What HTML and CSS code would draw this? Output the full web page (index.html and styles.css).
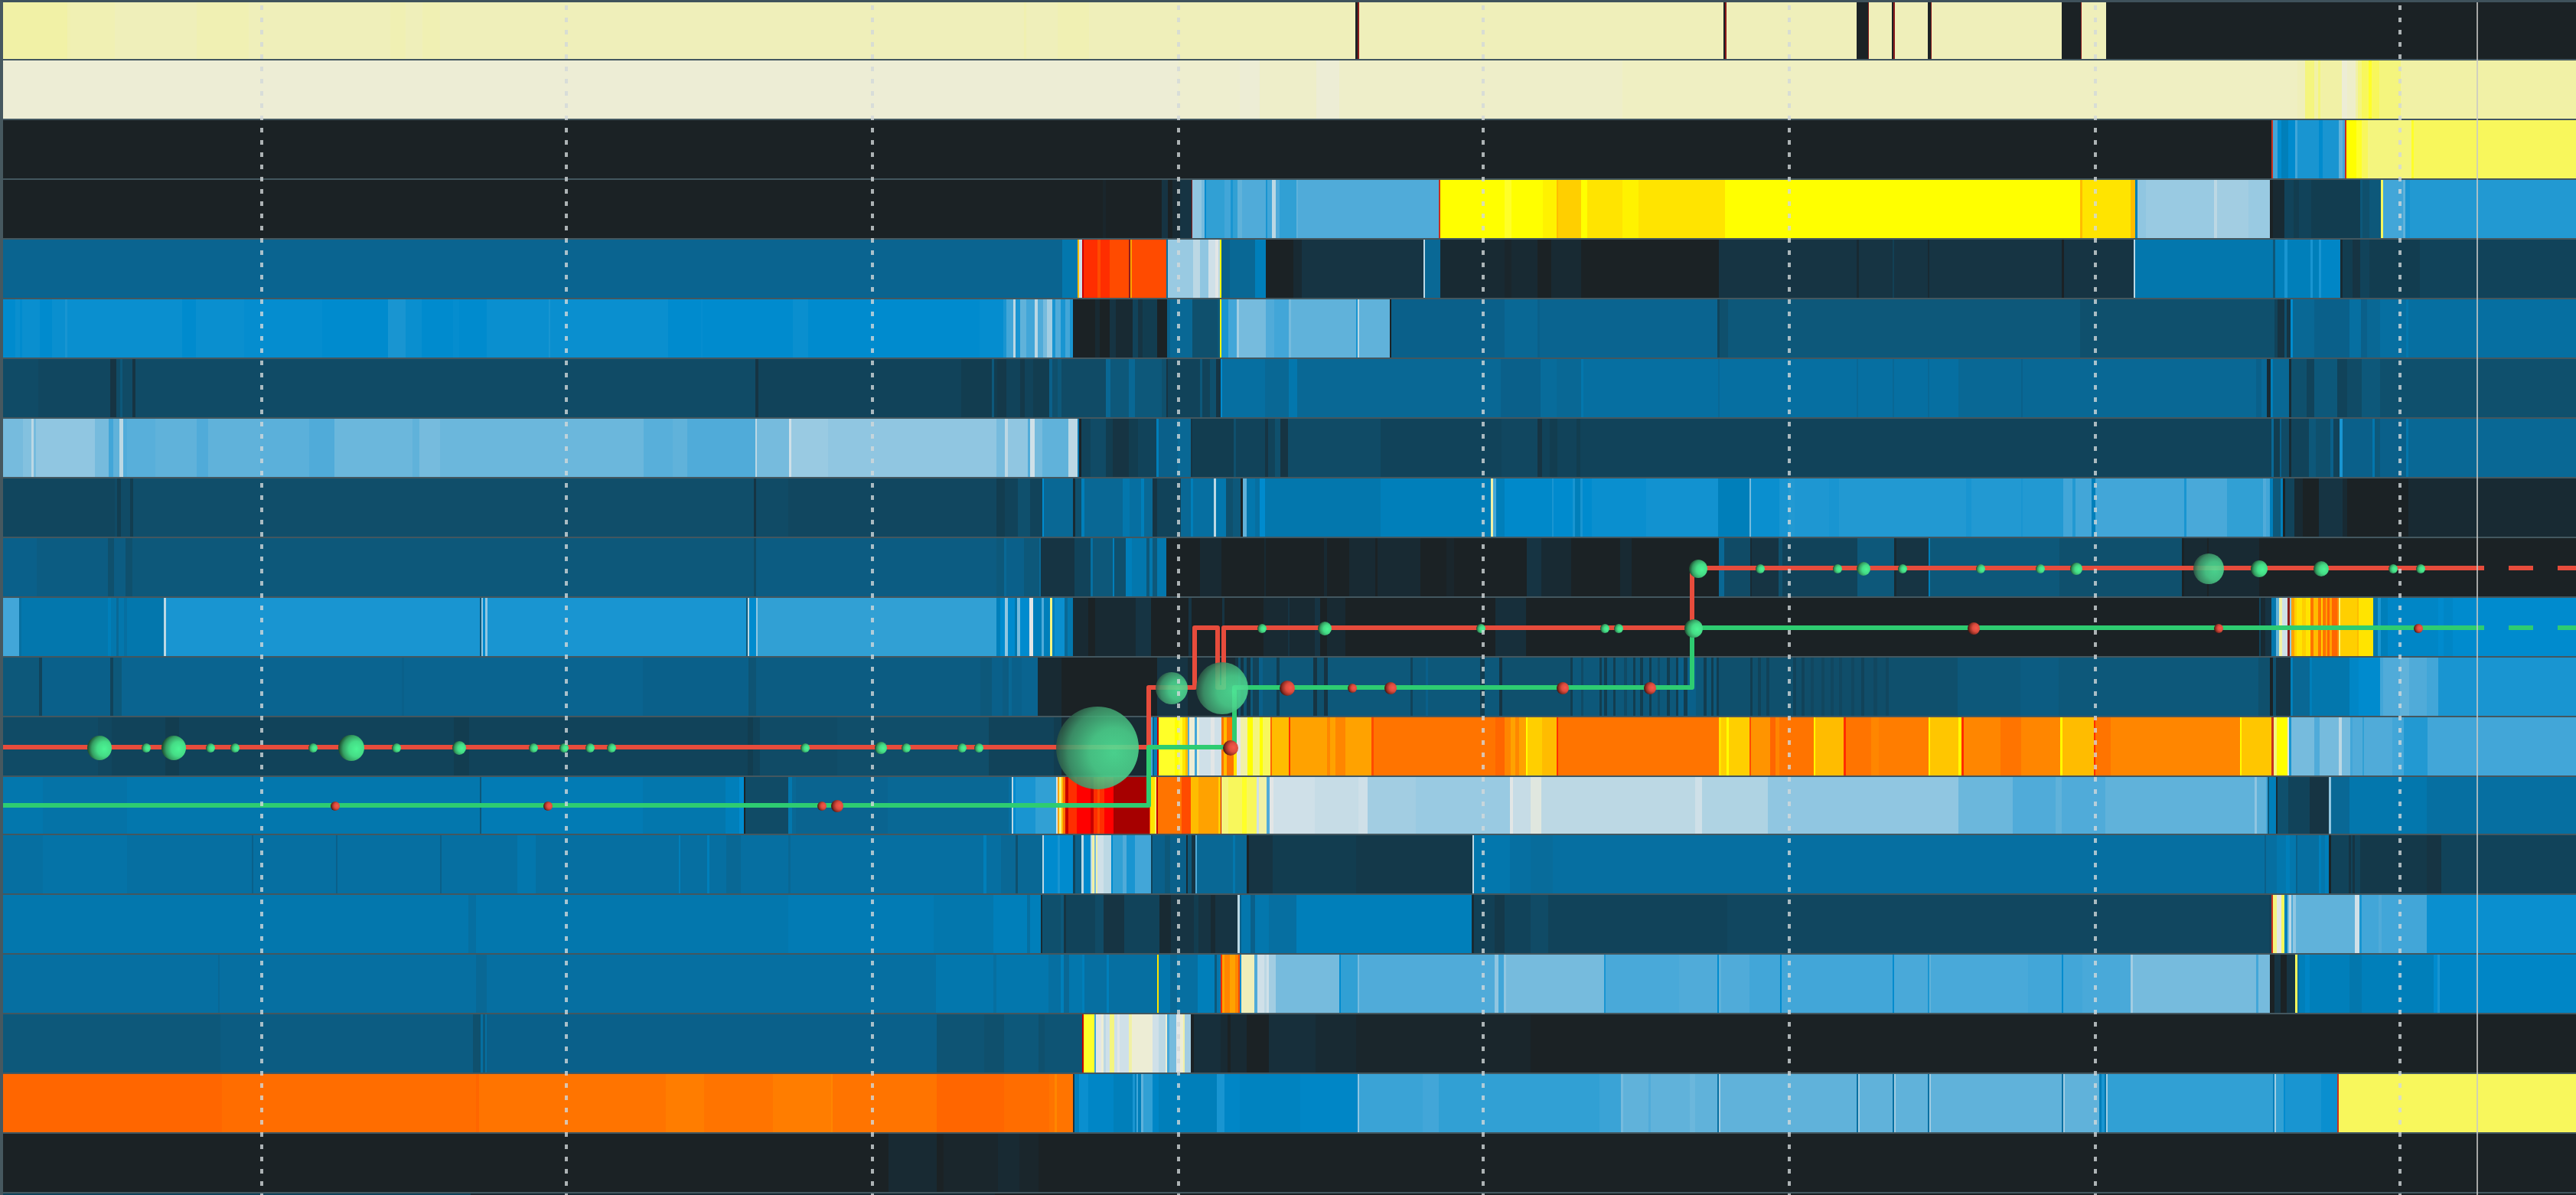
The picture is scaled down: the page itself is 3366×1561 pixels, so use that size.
FILE: index.html
```html
<!DOCTYPE html>
<html lang="en">
<head>
<meta charset="utf-8">
<title>Order book heatmap</title>
<link rel="stylesheet" href="styles.css">
</head>
<body>
<main class="chart" role="img" aria-label="Order book liquidity heatmap with best bid, best ask and traded volume">
  <div class="levels" id="levels"></div>
  <svg class="overlay" viewBox="0 0 3366 1561" preserveAspectRatio="none" aria-hidden="true">
    <defs>
      <radialGradient id="buy" cx="0.7" cy="0.54" r="0.74">
        <stop offset="0" stop-color="#4cf494"/>
        <stop offset="0.4" stop-color="#45dd86"/>
        <stop offset="0.7" stop-color="#35a063"/>
        <stop offset="1" stop-color="#14301f"/>
      </radialGradient>
      <radialGradient id="buyLarge" cx="0.7" cy="0.56" r="0.74">
        <stop offset="0" stop-color="#50e698" stop-opacity="0.88"/>
        <stop offset="0.4" stop-color="#4cd28c" stop-opacity="0.88"/>
        <stop offset="0.75" stop-color="#3f9a6c" stop-opacity="0.86"/>
        <stop offset="1" stop-color="#274539" stop-opacity="0.84"/>
      </radialGradient>
      <radialGradient id="sell" cx="0.7" cy="0.46" r="0.74">
        <stop offset="0" stop-color="#f5584a"/>
        <stop offset="0.4" stop-color="#dd4c3e"/>
        <stop offset="0.7" stop-color="#963025"/>
        <stop offset="1" stop-color="#260c0a"/>
      </radialGradient>
    </defs>
    <path class="ask" d="M4 976H1501V898H1561V820H1591V898H1599V820H2211V742H3246"/>
    <path class="bid" d="M4 1052H1501V976H1613V898H2211V820H3246"/>
    <path class="ask" d="M3278 742H3310M3342 742H3366"/>
    <path class="bid" d="M3278 820H3310M3342 820H3366"/>
    <g id="trades"></g>
    <g class="grid">
      <path d="M342 7V1561M740 7V1561M1140 7V1561M1540 7V1561M1938 7V1561M2338 7V1561M2738 7V1561M3136 7V1561"/>
    </g>
    <path class="now" d="M3237 1V1561"/>
  </svg>
</main>
<script src="chart.js"></script>
</body>
</html>
```
FILE: styles.css
```css
* {
  box-sizing: border-box;
}

body {
  margin: 0;
  background: #1b2225;
}

.chart {
  position: relative;
  height: 100vh;
  overflow: hidden;
  border-top: 3px solid #3f525b;
  border-left: 4px solid #46585f;
}

.levels {
  display: grid;
  height: 100%;
  grid-template-rows: 76fr repeat(12, 78fr) 76fr repeat(6, 78fr) 2fr;
}

.level {
  display: flex;
  min-height: 0;
  border-bottom: 2px solid #43575f;
}

.level:last-child {
  border-bottom: 0;
}

.cell {
  flex: 1 0 0;
  min-width: 0;
}

/* The marks share the plot's full box, borders included. */
.overlay {
  position: absolute;
  top: -3px;
  left: -4px;
  width: calc(100% + 4px);
  height: calc(100% + 3px);
}

.ask,
.bid {
  fill: none;
  stroke-width: 6;
  stroke-linejoin: round;
}

.ask {
  stroke: #e74c3c;
}

.bid {
  stroke: #2ecc71;
}

.grid {
  fill: none;
  stroke: #d2d8da;
  stroke-opacity: 0.8;
  stroke-width: 4;
  stroke-dasharray: 6 10;
}

.now {
  stroke: #c8c8c6;
  stroke-opacity: 0.8;
  stroke-width: 2;
}
```
FILE: chart.js
```js
// Liquidity colours, from an empty level to the heaviest one.
const scale = {
  a: '#1b2225', b: '#182a33', c: '#163443', d: '#123d50', e: '#11435a',
  U: '#104b66', f: '#0f506d', g: '#0d587a', h: '#0a608a', i: '#096895',
  j: '#066fa1', k: '#0377ad', l: '#007fba', W: '#0086c6', m: '#008bce',
  T: '#0a8fcf', n: '#1995d1', V: '#2299d2', o: '#31a0d4', p: '#42a6d8',
  q: '#50abd9', r: '#60b2da', s: '#76bbdd', t: '#90c6e1', u: '#a2cde2',
  v: '#bcd8e4', w: '#cfe0e8', x: '#e2e6e6', y: '#ededd5', _: '#eeeec9',
  z: '#efefba', A: '#f1f1a6', B: '#f4f57e', C: '#f8f75c', D: '#ffff28',
  E: '#ffff00', F: '#ffe400', G: '#ffcf00', H: '#ffbc00', I: '#ffa200',
  J: '#ff8600', K: '#ff7400', L: '#ff6600', M: '#ff4b00', N: '#ff2e00',
  O: '#ff0000', P: '#c80000', Q: '#a60000', R: '#8a1c1c', S: '#c8301c'
};

const left = 4;
const right = 3366;

// A run of several keys stands for their even blend.
function colour(keys) {
  if (keys.length === 1) return scale[keys];
  const parts = [...keys].map(k => parseInt(scale[k].slice(1), 16));
  const channel = shift => Math.round(
    parts.reduce((sum, p) => sum + ((p >> shift) & 255), 0) / parts.length);
  return `rgb(${channel(16)}, ${channel(8)}, ${channel(0)})`;
}

// One string per price level: the time at which a colour starts, then its keys.
const levels = [
  '4A 88Az 92Azz 150z 257Azz 325z 510Azz 530z 552Azz 575z 1338Az 1341z 1382Azz 1423z 1771a 1774R 1776z 2252a 2254R 2256z 2426a 2441R 2442z 2472a 2474R 2476z 2519a 2523R 2524z 2694a 2719R 2720z 2752a',
  '4y 1540y_ 1620y 1646_ 1720y 1750_ 2120_z 3002z 3012B 3024A 3029B 3032A 3060y 3067_ 3078A 3081B 3086C 3095D 3099C 3109B 3137A',
  '4a 2968S 2970p 2976m 2981l 2990m 2999p 3002n 3030m 3035n 3056r 3061p 3064S 3066E 3079D 3086C 3094B 3151D 3154C',
  '4a 1441ab 1445a 1518c 1526a 1532b 1542c 1557R 1558t 1570s 1574m 1576o 1600p 1608n 1611o 1617r 1623q 1654n 1656p 1662v 1667q 1672o 1694r 1696q 1880S 1882E 1966D 1975E 2016EF 2034H 2036G 2066E 2074F 2120EF 2141F 2254E 2718H 2721F 2784H 2790l 2793t 2804tu 2893v 2897u 2938tu 2966a 2970b 2985e 2997d 3004e 3020d 3084g 3087f 3096g 3111C 3114p 3140r 3143n 3149V',
  '4hi 1388k 1408H 1410w 1414P 1416N 1434M 1438N 1450M 1475R 1477I 1479M 1524j 1526tu 1559v 1568t 1579w 1588x 1592v 1594E 1596h 1607i 1640l 1654a 1690b 1701c 1860v 1862i 1882b 1966ab 1975b 2009a 2027b 2066a 2246c 2426b 2429c 2473de 2475c 2519b 2521c 2694a 2697c 2788v 2790k 2970g 2973l 2985n 2989l 3019n 3022l 3030n 3033W 3058b 3061d 3074c 3084e 3096d 3162e',
  '4m 20T 26m 29T 52m 68T 85n 88T 238m 256T 319mT 421m 507n 530T 551m 592mT 600m 636T 717n 719T 873m 916mT 918m 1036T 1056m 1280mT 1311n 1315p 1324v 1327n 1333r 1341p 1352v 1356q 1363s 1368u 1375n 1379q 1386n 1392p 1398n 1402a 1431b 1437a 1450c 1458b 1480e 1487c 1493d 1512a 1525h 1529i 1558f 1591g 1594E 1596n 1605p 1616u 1619s 1654q 1665p 1684s 1687r 1772n 1774v 1776r 1816a 1818h 1966i 2009h 2012hi 2244e 2247f 2258g 2718f 2972e 2976c 2985f 2988c 2993m 2996i 3024h 3070j 3085h 3093i 3110j 3144k 3147j',
  '4U 50eU 144c 152U 157g 160U 173c 177U 987c 991e 1256d 1296g 1299d 1303cd 1315e 1333cd 1339e 1350d 1371h 1375f 1382g 1387U 1445i 1451g 1475i 1483g 1518f 1524c 1526e 1568g 1571e 1581f 1589c 1595m 1597j 1653i 1684k 1695i 1961h 2013ij 2034i 2066k 2069j 2245i 2247j 2426i 2428j 2473i 2475j 2519i 2521j 2559i 2641h 2643i 2948h 2955i 2962b 2967l 2970i 2991b 2994f 3014e 3024g 3054e 3067U 3086g 3110f',
  '4s 30st 41v 44s 47t 124s 142p 148r 156v 161q 166qr 203r 257q 272r 340rrq 404q 437rs 539r 548s 575rs 841qr 879r 898q 987v 989s 1031w 1034tu 1082t 1302s 1313v 1317t 1343q 1346w 1352s 1362r 1396v 1408k 1410a 1413e 1425U 1445d 1454c 1475d 1487e 1511l 1514h 1539i 1556c 1558d 1612f 1615e 1653c 1657e 1666f 1673c 1683U 1804e 1962eU 2009c 2015e 2025d 2035e 2060d 2065e 2968i 2971d 2979h 2981U 2991b 2994e 3017g 3026f 3045h 3049e 3057n 3061h 3100k 3103g 3110h 3144k 3147i',
  '4eeU 150U 153d 158U 170d 174Uf 985c 988U 1030eU 1302d 1313e 1330f 1346e 1362m 1364i 1402b 1405f 1413l 1417i 1467k 1476j 1491l 1495i 1506c 1512e 1543i 1556l 1559j 1586v 1589k 1602f 1611g 1621a 1624r 1629k 1640j 1646m 1653k 1804l 1948A 1951p 1955l 1966Wm 2028n 2030m 2055n 2058l 2065n 2068m 2080T 2151nT 2245l 2286s 2288T 2325n 2337V 2345nV 2390n 2403V 2569n 2576V 2641n 2643V 2696p 2708V 2712p 2733l 2738p 2854n 2857pq 2910o 2957q 2961p 2966l 2970g 2980l 2983a 2986e 2998b 3009a 3030c 3061b 3067a 3147b',
  '4h 48gh 141f 149gh 164f 173g 985ef 988gh 1302g 1312i 1315h 1338g 1358i 1360c 1404e 1425j 1428g 1454l 1456f 1471l 1479k 1498g 1502k 1506g 1512k 1524a 1568b 1596a 1652b 1654a 1730b 1734a 1763b 1797a 1800b 1856a 1890ab 1900a 1995c 2014b 2053a 2117b 2132a 2246i 2253U 2287b 2289c 2324f 2329e 2427g 2475b 2478c 2520l 2522g 2691f 2851a 2854b 2884a 2886b 2952a',
  '4p 25j 28k 141l 145k 152i 155k 162j 166k 214v 217n 627g 629t 631m 634t 637n 975g 977v 979m 988t 990o 1302l 1307m 1313t 1317m 1326k 1329s 1333m 1345x 1350l 1361q 1364l 1372B 1375l 1378T 1391i 1395k 1402b 1422a 1431b 1484c 1504a 1553c 1557a 1597c 1600a 1651b 1683c 1685b 1718c 1725a 1734b 1758a 1954bc 1994a 2952e 2954b 2960c 2968k 2974r 2978A 2982w 2989R 2992t 2994I 2998G 3001F 3008G 3013F 3019K 3023H 3029K 3033G 3035K 3039I 3041L 3044I 3047L 3054J 3056B 3058G 3080H 3082F 3101k 3107n 3111l 3120W 3186m 3193W 3205m',
  '4g 51e 55h 144e 148g 159hi 525h 528hi 840h 978fg 988gh 1281g 1296h 1310gh 1318i 1322h 1335hi 1356b 1387a 1512c 1552b 1614c 1618f 1621c 1625f 1629c 1634g 1637cf 1645h 1650g 1668d 1672g 1716c 1721f 1730c 1735g 1843e 1846g 1863h 1866g 1934d 1940g 1959c 1963f 2052d 2055g 2066U 2069g 2090d 2093g 2096d 2100g 2108d 2111g 2122U 2126g 2134d 2137g 2143d 2147g 2155d 2158g 2166U 2169g 2178d 2182g 2190d 2193h 2200d 2205h 2216g 2226d 2230g 2236d 2239g 2243d 2246f 2287d 2290f 2297e 2301f 2308e 2312f 2330f 2343e 2347Uf 2354e 2358Uf 2366eU 2370Uf 2380eU 2384Uf 2392eU 2396Uf 2403eU 2407Uf 2419eU 2423Uf 2432e 2436Uf 2448eU 2453Uf 2464eU 2468f 2558g 2640gh 2690g 2951f 2966a 2970f 2974c 2993l 2996i 3018l 3021k 3070W 3082m 3110p 3114q 3136r 3148q 3171p 3186n',
  '4U 128eU 146e 216d 234e 593d 613e 977d 984e 993U 1094Uf 1292e 1377d 1387b 1498c 1504p 1506h 1508l 1512P 1514D 1535E 1540D 1545F 1549H 1552q 1554y 1561p 1564y 1567w 1582x 1587w 1596K 1599H 1603K 1612F 1616x 1621A 1630E 1637B 1646E 1650C 1660L 1662H 1684N 1686I 1734J 1738I 1745J 1758I 1792M 1795K 1954L 1966J 1974I 1980J 1985I 1994E 1996G 2015H 2034N 2036K 2246F 2249G 2256E 2259G 2286M 2288IJ 2313L 2320J 2325K 2370E 2372H 2409N 2412K 2445J 2455JK 2520E 2522GH 2559E 2563N 2566J 2614K 2641J 2692E 2695H 2736N 2738K 2758J 2927E 2929GH 2968S 2971B 2975E 2989x 2991n 2994s 3024q 3031s 3056v 3060s 3071p 3074q 3087o 3089q 3126p 3141V 3172p',
  '4k 56jk 166k 627g 629kl 840k 948l 966m 972a 974U 1030k 1035i 1040hi 1160i 1318j 1322v 1324m 1327n 1353o 1380w 1382I 1384B 1387H 1389K 1392P 1396N 1407O 1425P 1429N 1434M 1437N 1443O 1455Q 1502M 1503F 1509C 1511P 1513K 1544M 1556H 1566I 1592G 1595P 1596B 1605C 1623D 1629C 1642w 1645A 1655q 1659x 1664w 1718vw 1775w 1787u 1850tu 1973x 1977vw 2000xx_w 2014v 2215w 2224uv 2310t 2559rs 2630q 2686r 2694q 2751r 2946t 2949r 2961p 2963g 2965l 2974b 2976f 2990e 3018c 3043t 3046i 3070k 3171j',
  '4j 56jk 166j 329h 331j 439h 441j 575h 577j 676k 700j 887l 889j 924l 927j 949i 968j 1030i 1033j 1285l 1289j 1308i 1327f 1330i 1362v 1364m 1382n 1385m 1402e 1405h 1413v 1416m 1425v 1427A 1430s 1432A 1434w 1442v 1452m 1454o 1467q 1472n 1483p 1504e 1506h 1522g 1529h 1550b 1552g 1557c 1562q 1564i 1611k 1614i 1629a 1632c 1663d 1772cd 1924v 1926k 1973j 2000ij 2029j 2959h 2961j 2975k 2987l 2992k 3000h 3002j 3030l 3033k 3038l 3043a 3046e 3069c 3072e 3074c 3077e 3084cd 3171c 3190e',
  '4k 612j 622k 1030kl 1220k 1298l 1342j 1346l 1360b 1362f 1386g 1390c 1393e 1431U 1442c 1469e 1515b 1530c 1560d 1566c 1582b 1588c 1617v 1620h 1622k 1634h 1640k 1658j 1694l 1923b 1926de 1953cd 1966e 2000U 2023e 2257eU 2965e 2968S 2970B 2975x 2981C 2985l 2989s 2991v 2994q 2996t 3000r 3077w 3083n 3086p 3108q 3112p 3171T',
  '4j 285i 287j 622i 636j 1223k 1298j 1302k 1370j 1386l 1390i 1397k 1414l 1417j 1446l 1449j 1512F 1514k 1529i 1538j 1565l 1587g 1590k 1595N 1597I 1600J 1607I 1614J 1618M 1620m 1622z 1639q 1643w 1652v 1655w 1658u 1667s 1750m 1752o 1774s 1776q 1953t 1958p 1965t 1968s 2096n 2098pq 2194q 2244m 2246r 2249q 2286p 2326m 2328p 2473m 2475pq 2519n 2521r 2523pq 2650p 2694m 2696p 2721pq 2784u 2787s 2948p 2951s 2966a 2972c 2980a 2988c 2999C 3002j 3004l 3012W 3018l 3070k 3086l 3180m 3185n 3188W',
  '4g 288gh 618f 628j 631g 634j 636h 1224fg 1286f 1312g 1357f 1365fg 1414P 1416D 1430p 1432x 1439y 1442v 1445w 1450B 1456w 1460x 1463w 1475A 1479y 1506w 1514v 1523y 1525p 1528s 1537x 1542y 1546A 1548u 1556a 1560bc 1595b 1604a 1608b 1629a 1658bc 1719b 1772ab 2000a',
  '4L 290KL 622L 626K 870JK 920K 1010JK 1086J 1088K 1224L 1312KL 1371K 1378J 1381K 1402c 1404l 1410T 1422W 1455l 1480n 1483l 1485p 1487l 1491r 1494o 1506W 1514l 1590n 1600W 1620lW 1699W 1774t 1776op 1859p 1880o 2090op 2118s 2121r 2154q 2157r 2208rs 2215r 2244j 2246u 2248r 2426j 2428u 2430r 2473j 2475u 2477r 2519j 2521u 2523r 2694j 2696u 2698r 2743l 2746n 2750k 2752u 2754o 2970l 2972u 2974o 2984m 2986n 3033T 3054S 3056C',
  '4a 1161b 1224a 1233ab 1304b 1332ab 1357a',
  '4e 615b 1300a'
];

const board = document.getElementById('levels');
for (const level of levels) {
  const marks = level.split(' ').map(m => {
    const [, start, keys] = m.match(/^(\d+)(\D+)$/);
    return [Number(start), keys];
  });
  const row = document.createElement('div');
  row.className = 'level';
  marks.forEach(([start, keys], n) => {
    const end = n + 1 < marks.length ? marks[n + 1][0] : right;
    const cell = document.createElement('span');
    cell.className = 'cell';
    cell.style.flexGrow = end - Math.max(start, left);
    cell.style.background = colour(keys);
    row.append(cell);
  });
  board.append(row);
}

// Trades as [side, y, then x and radius of each bubble].
const trades = [
  ['buy', 977, 130, 16, 191, 6, 227, 16, 275, 6, 307, 6, 409, 6, 459, 17, 518, 6, 600, 9, 697, 6, 737, 6, 771, 6, 799, 6, 1052, 6, 1151, 8, 1184, 6, 1257, 6, 1279, 6, 1434, 54],
  ['sell', 1053, 438, 6, 716, 6, 1074, 6, 1094, 8],
  ['sell', 977, 1608, 10],
  ['buy', 899, 1531, 21, 1597, 34],
  ['sell', 899, 1682, 10, 1767, 6, 1817, 8, 2042, 8, 2156, 8],
  ['buy', 821, 1649, 6, 1731, 9, 1935, 6, 2097, 6, 2115, 6, 2213, 12],
  ['sell', 821, 2579, 8, 2899, 6, 3160, 6],
  ['buy', 743, 2219, 12, 2300, 6, 2401, 6, 2435, 9, 2486, 6, 2588, 6, 2666, 6, 2713, 8, 2886, 20, 2952, 11, 3033, 10, 3127, 6, 3163, 6]
];

const layer = document.getElementById('trades');
for (const [side, y, ...bubbles] of trades) {
  for (let n = 0; n < bubbles.length; n += 2) {
    const r = bubbles[n + 1];
    const dot = document.createElementNS('http://www.w3.org/2000/svg', 'circle');
    dot.setAttribute('cx', bubbles[n]);
    dot.setAttribute('cy', y);
    dot.setAttribute('r', r);
    dot.setAttribute('fill', r > 18 ? 'url(#buyLarge)' : `url(#${side})`);
    layer.append(dot);
  }
}
```
